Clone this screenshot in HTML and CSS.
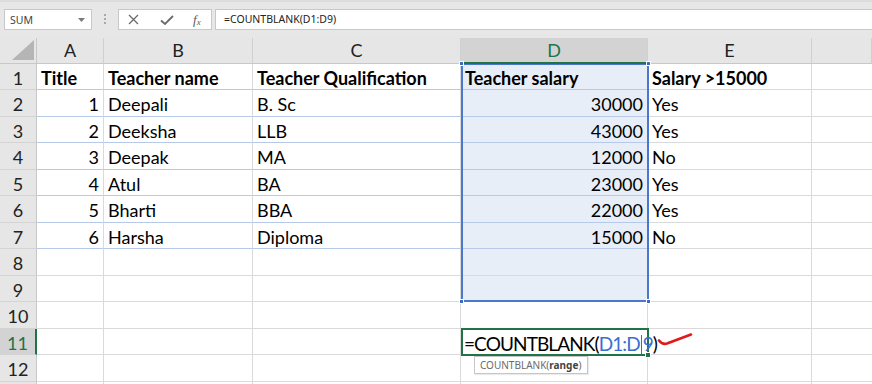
FILE: index.html
```html
<!DOCTYPE html>
<html>
<head>
<meta charset="utf-8">
<link rel="stylesheet" href="styles.css">
</head>
<body>
<div class="toolbar">
  <div class="namebox"><span>SUM</span><svg class="drop" width="7" height="4" viewBox="0 0 7 4"><path d="M0 0h7L3.5 4z" fill="#7a7a7a"/></svg></div>
  <div class="grip"><i></i><i></i><i></i></div>
  <div class="fnbox">
    <svg width="11" height="11" viewBox="0 0 11 11"><path d="M1 1L10 10M10 1L1 10" stroke="#6a6a6a" stroke-width="1.3" fill="none"/></svg>
    <svg width="14" height="10" viewBox="0 0 14 10"><path d="M1 5.5L5 9L13 1" stroke="#6a6a6a" stroke-width="1.8" fill="none"/></svg>
    <span class="fx">f<sub>x</sub></span>
  </div>
  <div class="formula">=COUNTBLANK(D1:D9)</div>
</div>
<div class="sheet">
  <div class="corner"><svg width="22" height="20" viewBox="0 0 22 20"><path d="M22 0V20H0z" fill="#b5b5b5"/></svg></div>
  <div class="ch">A</div><div class="ch">B</div><div class="ch">C</div><div class="ch hd">D</div><div class="ch">E</div><div class="ch"></div>

  <div class="rh">1</div><div class="c b t">Title</div><div class="c b t">Teacher name</div><div class="c b t">Teacher Qualification</div><div class="c b t sel top">Teacher salary<div class="range"><i class="h tl"></i><i class="h tr"></i><i class="h bl"></i><i class="h br"></i></div></div><div class="c b">Salary &gt;15000</div><div class="c f"></div>
  <div class="rh">2</div><div class="c r t">1</div><div class="c t">Deepali</div><div class="c t">B. Sc</div><div class="c r t sel">30000</div><div class="c">Yes</div><div class="c f"></div>
  <div class="rh">3</div><div class="c r t">2</div><div class="c t">Deeksha</div><div class="c t">LLB</div><div class="c r t sel">43000</div><div class="c">Yes</div><div class="c f"></div>
  <div class="rh">4</div><div class="c r t">3</div><div class="c t">Deepak</div><div class="c t">MA</div><div class="c r t sel">12000</div><div class="c">No</div><div class="c f"></div>
  <div class="rh">5</div><div class="c r t">4</div><div class="c t">Atul</div><div class="c t">BA</div><div class="c r t sel">23000</div><div class="c">Yes</div><div class="c f"></div>
  <div class="rh">6</div><div class="c r t">5</div><div class="c t">Bharti</div><div class="c t">BBA</div><div class="c r t sel">22000</div><div class="c">Yes</div><div class="c f"></div>
  <div class="rh">7</div><div class="c r t">6</div><div class="c t">Harsha</div><div class="c t">Diploma</div><div class="c r t sel">15000</div><div class="c">No</div><div class="c f"></div>
  <div class="rh">8</div><div class="c"></div><div class="c"></div><div class="c"></div><div class="c sel"></div><div class="c"></div><div class="c f"></div>
  <div class="rh">9</div><div class="c"></div><div class="c"></div><div class="c"></div><div class="c sel"></div><div class="c"></div><div class="c f"></div>
  <div class="rh">10</div><div class="c"></div><div class="c"></div><div class="c"></div><div class="c"></div><div class="c"></div><div class="c f"></div>
  <div class="rh ha">11</div><div class="c"></div><div class="c"></div><div class="c"></div>
  <div class="c edit">=COUNTBLANK(<span class="ref">D1:D<i class="caret"></i>9</span>)<i class="fill"></i>
    <svg class="tick" width="36" height="16" viewBox="0 0 36 16"><path d="M2 8.5C4 11 7 12.5 10 11.5L34 2.5" stroke="#e0191b" stroke-width="2.6" fill="none" stroke-linecap="round"/></svg>
    <div class="tip">COUNTBLANK(<b>range</b>)</div>
  </div>
  <div class="c"></div><div class="c f"></div>
  <div class="rh">12</div><div class="c"></div><div class="c"></div><div class="c"></div><div class="c"></div><div class="c"></div><div class="c f"></div>
  <div class="rh"></div><div class="c"></div><div class="c"></div><div class="c"></div><div class="c"></div><div class="c"></div><div class="c f"></div>
</div>
</body>
</html>
```

FILE: styles.css
```css
* { box-sizing: border-box; }
html, body { margin: 0; height: 100%; overflow: hidden; }
body {
  background: #e7e7e7;
  font-family: Lato, "Liberation Sans", sans-serif;
  color: #000;
}

/* formula bar */
.toolbar {
  height: 38px;
  display: flex;
  align-items: flex-start;
  padding: 7px 0 0 4px;
  border-top: 2px solid #dcdcdc;
}
.namebox {
  width: 88px;
  height: 21px;
  background: #fff;
  border: 1px solid #c8c8c8;
  display: flex;
  align-items: center;
  justify-content: space-between;
  padding: 0 6px 0 5px;
  font-family: "Noto Sans", sans-serif;
  font-size: 10.5px;
  color: #444;
}
.grip {
  margin: 5px 0 0 12px;
  display: flex;
  flex-direction: column;
  gap: 2px;
}
.grip i { width: 2px; height: 2px; background: #a8a8a8; display: block; }
.fnbox {
  margin-left: 12px;
  width: 94px;
  height: 21px;
  background: #fff;
  border: 1px solid #c8c8c8;
  display: flex;
  align-items: center;
  padding-left: 9px;
  gap: 21px;
}
.fx {
  font-family: "Liberation Serif", serif;
  font-style: italic;
  font-size: 13px;
  color: #5a5a5a;
  margin-left: -2px;
}
.fx sub { font-size: 9px; vertical-align: -1px; }
.formula {
  flex: 1;
  margin: 0 -2px 0 3px;
  height: 21px;
  background: #fff;
  border: 1px solid #c8c8c8;
  font-family: "Noto Sans", sans-serif;
  font-size: 10.5px;
  color: #222;
  line-height: 19px;
  padding-left: 8px;
}

/* sheet grid */
.sheet {
  display: grid;
  grid-template-columns: 37px 67px 149px 208px 187px 164px 60px;
  grid-template-rows: 26px 26px 27px 26px 27px 26px 27px 26px 27px 26px 27px 26px 27px 20px;
  background: #fff;
}
.corner {
  background: #e6e6e6;
  border-right: 1px solid #c8c8c8;
  border-bottom: 1px solid #c8c8c8;
  display: flex;
  align-items: flex-end;
  justify-content: flex-end;
  padding: 0 2px 3px 0;
}
.ch {
  background: #e6e6e6;
  border-right: 1px solid #d0d0d0;
  border-bottom: 1px solid #c8c8c8;
  text-align: center;
  font-size: 18px;
  line-height: 25px;
  color: #222;
}
.ch.hd {
  background: #d3d3d3;
  color: #217346;
  border-bottom: 2px solid #217346;
}
.rh {
  background: #e6e6e6;
  border-right: 1px solid #c8c8c8;
  border-bottom: 1px solid #d4d4d4;
  text-align: center;
  font-size: 18px;
  padding-top: 2px;
  line-height: 24px;
  color: #222;
}
.rh.ha {
  background: #d3d3d3;
  color: #217346;
  border-right: 2px solid #217346;
}
.c {
  border-right: 1px solid #dadada;
  border-bottom: 1px solid #dadada;
  font-size: 18px;
  padding: 2px 4px 0 4px;
  line-height: 24px;
  white-space: nowrap;
}
.c.f { border-right: none; }
.b { font-weight: 700; }
.r { text-align: right; }
.t { border-bottom-color: #b7c9e8; }
.sel { background: #e8eef8; }
.top { position: relative; z-index: 1; }

/* range reference highlight (D1:D9) */
.range {
  position: absolute;
  left: 0;
  top: 0;
  width: 188px;
  height: 238px;
  border: 2px solid #4a78cf;
  border-top-width: 1px;
}
.h {
  position: absolute;
  width: 5px;
  height: 5px;
  background: #3e6bc2;
  border: 1px solid #fff;
}
.h.tl { left: -4px; top: -4px; }
.h.tr { right: -4px; top: -4px; }
.h.bl { left: -4px; bottom: -4px; }
.h.br { right: -4px; bottom: -4px; }

/* active cell in edit mode */
.edit {
  position: relative;
  z-index: 2;
  margin: -1px -1px -1px 0;
  border: 2px solid #217346;
  padding: 1px 0 0 1px;
  font-size: 19px;
  letter-spacing: -0.9px;
  line-height: 25px;
  overflow: visible;
  background: #fff;
}
.ref { color: #3a6fd2; }
.caret {
  display: inline-block;
  width: 1px;
  height: 20px;
  background: #666;
  vertical-align: -4px;
  margin: 0 1px;
}
.fill {
  position: absolute;
  right: -4px;
  bottom: -4px;
  width: 6px;
  height: 6px;
  background: #217346;
  border: 1px solid #fff;
}
.tick {
  position: absolute;
  left: 194px;
  top: 2px;
}
.tip {
  position: absolute;
  left: 11px;
  top: 100%;
  margin-top: 2px;
  height: 18px;
  width: 114px;
  background: #fff;
  border: 1px solid #c6c6c6;
  box-shadow: 1px 1px 1px rgba(0,0,0,0.08);
  font-family: "Noto Sans", sans-serif;
  font-size: 10px;
  letter-spacing: 0;
  line-height: 16px;
  color: #6a6a6a;
  padding-left: 5px;
}
.tip b { color: #444; }
```
